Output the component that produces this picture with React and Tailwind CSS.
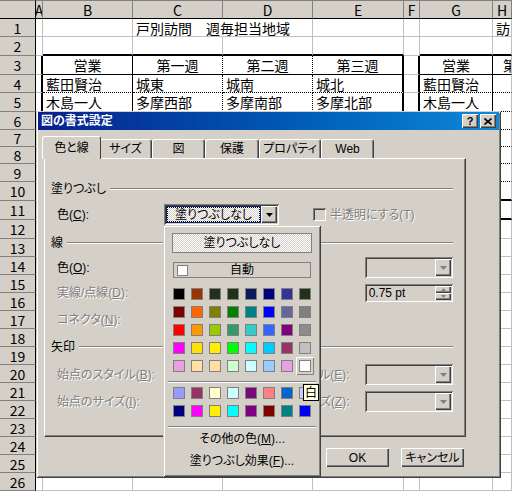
import React from 'react';

const UI = "font-['Liberation_Sans','Noto_Sans_CJK_JP',sans-serif] [font-feature-settings:'palt']";
const DIS = 'text-[#808080] [text-shadow:1px_1px_0_#ffffff]';
const RAISED = 'shadow-[inset_1px_1px_0_#ffffff,inset_-1px_-1px_0_#404040,inset_-2px_-2px_0_#808080]';
const SUNKEN = 'shadow-[inset_1px_1px_0_#808080,inset_-1px_-1px_0_#ffffff,inset_2px_2px_0_#404040,inset_-2px_-2px_0_#d4d0c8]';
const FRAME = 'shadow-[inset_1px_1px_0_#d4d0c8,inset_-1px_-1px_0_#404040,inset_2px_2px_0_#ffffff,inset_-2px_-2px_0_#808080]';
const DITHER = 'bg-[image:repeating-conic-gradient(#ffffff_0_25%,#d4d0c8_0_50%)] bg-[length:2px_2px]';

const LETTERS = ['', 'A', 'B', 'C', 'D', 'E', 'F', 'G', 'H'];

const CELLS = {
  '1-3': '戸別訪問　週毎担当地域',
  '1-8': '訪問',
  '3-2': '営業', '3-3': '第一週', '3-4': '第二週', '3-5': '第三週', '3-7': '営業', '3-8': '第一週',
  '4-2': '藍田賢治', '4-3': '城東', '4-4': '城南', '4-5': '城北', '4-7': '藍田賢治',
  '5-2': '木島一人', '5-3': '多摩西部', '5-4': '多摩南部', '5-5': '多摩北部', '5-7': '木島一人',
};

const PAL1 = [
  ['#000000', '#993300', '#22301a', '#1c3314', '#0c1a5a', '#000080', '#333399', '#22301a'],
  ['#800000', '#ff6600', '#808000', '#008000', '#008080', '#0000ff', '#666699', '#808080'],
  ['#ff0000', '#ff9900', '#99cc00', '#339966', '#33cccc', '#3366ff', '#800080', '#8c8c8c'],
  ['#ff00ff', '#ffe100', '#ffee00', '#00ff00', '#00ffff', '#00ccff', '#993366', '#c0c0c0'],
  ['#e8a0e0', '#ffe0a0', '#ffe0a0', '#ccffcc', '#ccffff', '#99ccff', '#e8a0e0', '#ffffff'],
];
const PAL2 = [
  ['#9999ff', '#993366', '#ffffcc', '#ccffff', '#7a0a7a', '#ff8080', '#0066cc', '#ccccff'],
  ['#000080', '#ff00ff', '#ffee00', '#00ffff', '#800080', '#800000', '#008080', '#0000ff'],
];

const inTable = (r, c) => r >= 3 && r <= 10 && ((c >= 2 && c <= 5) || c >= 7);

function bottomCls(r, c) {
  if (r === 2 && ((c >= 2 && c <= 5) || c >= 7)) return 'border-b-2 border-b-black';
  if (inTable(r, c) && r === 3) return 'border-b border-b-black';
  if (inTable(r, c) && r < 10) return 'border-b border-b-black [border-bottom-style:dotted]!';
  if (inTable(r, c) && r === 10) return 'border-b-2 border-b-black';
  if (r === 11 && c === 8) return 'border-b-2 border-b-black';
  return 'border-b border-b-[#c0c0c0]';
}

function rightCls(r, c) {
  const band = r >= 3 && r <= 10;
  if (r === 1 && c === 3) return 'border-r border-r-transparent';
  if (band && (c === 1 || c === 5 || c === 6)) return 'border-r-2 border-r-black';
  if (band && (c === 2 || c === 7)) return 'border-r border-r-black';
  if (band && (c === 3 || c === 4)) return 'border-r border-r-black [border-right-style:dotted]!';
  return 'border-r border-r-[#c0c0c0]';
}

function Cell({ r, c }) {
  const text = CELLS[`${r}-${c}`];
  const align = r === 3 && c !== 8 ? 'justify-center' : r === 3 ? 'pl-[10px]' : 'pl-[3px]';
  const spill = r === 1 && c === 3 ? 'relative z-10 overflow-visible' : 'overflow-hidden';
  return (
    <div className={`flex items-center whitespace-nowrap leading-none ${align} ${spill} ${rightCls(r, c)} ${bottomCls(r, c)}`}>
      {text}
    </div>
  );
}

function Sheet() {
  const rows = Array.from({ length: 26 }, (_, i) => i + 1);
  return (
    <div className="grid grid-cols-[36px_7px_90px_90px_90px_91px_16px_73px_19px] grid-rows-[19px_18px_19px_19px_18px_19px_18px_17px_17px_18px_19px_19px_19px_repeat(14,18px)] font-['Noto_Sans_CJK_JP',sans-serif] text-[14px] text-black">
      {LETTERS.map((l, c) => (
        <div key={c} className={`flex items-center justify-center overflow-hidden bg-[#d4d0c8] leading-none border-t border-t-[#808080] border-b border-b-black border-r ${c === 0 ? 'border-r-black' : 'border-r-[#808080]'}`}>
          {l}
        </div>
      ))}
      {rows.map(r => (
        <React.Fragment key={r}>
          <div className="flex items-center justify-center bg-[#d4d0c8] leading-none border-r border-r-black border-b border-b-[#808080]">{r}</div>
          {[1, 2, 3, 4, 5, 6, 7, 8].map(c => <Cell key={c} r={r} c={c} />)}
        </React.Fragment>
      ))}
    </div>
  );
}

function Arrow({ disabled }) {
  return (
    <div className={`flex h-full w-[16px] items-center justify-center bg-[#d4d0c8] ${RAISED}`}>
      <svg width="7" height="4" viewBox="0 0 7 4">
        <polygon points="0,0 7,0 3.5,4" fill={disabled ? '#808080' : '#000000'} />
      </svg>
    </div>
  );
}

function Combo() {
  return (
    <div className={`flex h-[21px] w-[89px] bg-[#d4d0c8] p-[2px] ${SUNKEN}`}>
      <div className="flex-1" />
      <Arrow disabled />
    </div>
  );
}

function Spinner() {
  return (
    <div className={`flex h-[18px] w-[89px] items-center bg-[#d4d0c8] p-[2px] ${SUNKEN}`}>
      <span className="flex-1 pl-[2px] text-[12px] leading-none">0.75 pt</span>
      <div className="flex h-full w-[16px] flex-col">
        <div className={`flex flex-1 items-center justify-center ${RAISED}`}>
          <svg width="5" height="3" viewBox="0 0 5 3"><polygon points="0,3 5,3 2.5,0" fill="#808080" /></svg>
        </div>
        <div className={`flex flex-1 items-center justify-center ${RAISED}`}>
          <svg width="5" height="3" viewBox="0 0 5 3"><polygon points="0,0 5,0 2.5,3" fill="#808080" /></svg>
        </div>
      </div>
    </div>
  );
}

function Section({ title, className }) {
  return (
    <div className={`flex h-[14px] items-center ${className}`}>
      <span className="leading-none">{title}</span>
      <div className="ml-[4px] h-[2px] flex-1 border-t border-t-[#808080] border-b border-b-white" />
    </div>
  );
}

const Key = ({ k }) => <>(<span className="underline">{k}</span>):</>;

function Swatch({ color, hot }) {
  return (
    <div className={`flex h-[18px] w-[18px] items-center justify-center ${hot ? 'shadow-[inset_1px_1px_0_#ffffff,inset_-1px_-1px_0_#808080]' : ''}`}>
      <div className="h-[12px] w-[12px] border border-[#808080]" style={{ backgroundColor: color }} />
    </div>
  );
}

function Palette() {
  return (
    <div className={`absolute left-[127px] top-[114px] flex h-[252px] w-[158px] flex-col bg-[#d4d0c8] text-[12px] ${FRAME}`}>
      <div className={`ml-[9px] mt-[8px] flex h-[20px] w-[140px] items-center justify-center border border-[#808080] leading-none ${DITHER}`}>
        塗りつぶしなし
      </div>
      <div className="ml-[10px] mt-[9px] flex h-[16px] w-[138px] items-center border border-[#808080] pl-[3px]">
        <div className="h-[11px] w-[11px] border border-[#808080] bg-white" />
        <span className="flex-1 pr-[14px] text-center leading-none">自動</span>
      </div>
      <div className="ml-[7px] mt-[7px] grid w-[144px] grid-cols-8">
        {PAL1.flatMap((row, i) => row.map((col, j) => <Swatch key={`${i}-${j}`} color={col} hot={i === 4 && j === 7} />))}
      </div>
      <div className="mx-[5px] mt-[6px] h-[2px] border-t border-t-[#808080] border-b border-b-white" />
      <div className="ml-[7px] mt-[1px] grid w-[144px] grid-cols-8">
        {PAL2.flatMap((row, i) => row.map((col, j) => <Swatch key={`${i}-${j}`} color={col} />))}
      </div>
      <div className="mx-[5px] mt-[6px] h-[2px] border-t border-t-[#808080] border-b border-b-white" />
      <div className="flex h-[22px] items-center justify-center leading-none">
        その他の色(<span className="underline">M</span>)...
      </div>
      <div className="flex h-[21px] items-center justify-center leading-none">
        塗りつぶし効果(<span className="underline">F</span>)...
      </div>
      <div className="absolute left-[140px] top-[159px] flex h-[17px] w-[16px] items-center justify-center border border-black bg-[#ffffe1] leading-none">
        白
      </div>
    </div>
  );
}

const TABS = [['色と線', 'w-[55px]'], ['サイズ', 'w-[53px]'], ['図', 'w-[53px]'], ['保護', 'w-[54px]'], ['プロパティ', 'w-[62px]'], ['Web', 'w-[53px]']];

function Dialog() {
  return (
    <div className={`absolute left-[36px] top-[111px] flex h-[367px] w-[465px] flex-col bg-[#d4d0c8] px-[2px] pt-[1px] text-[12px] text-black ${FRAME} ${UI}`}>
      <div className="flex h-[18px] items-center bg-linear-to-r from-[#0a1e8c] to-[#1088d8] pl-[3px] pr-[3px]">
        <span className="flex-1 text-[12px] font-bold leading-none text-white">図の書式設定</span>
        <div className={`flex h-[14px] w-[16px] items-center justify-center bg-[#d4d0c8] text-[11px] font-bold leading-none ${RAISED}`}>?</div>
        <div className={`ml-[2px] flex h-[14px] w-[16px] items-center justify-center bg-[#d4d0c8] ${RAISED}`}>
          <svg width="8" height="7" viewBox="0 0 8 7">
            <path d="M0.5 0.5 L7.5 6.5 M7.5 0.5 L0.5 6.5" stroke="#000" strokeWidth="1.6" />
          </svg>
        </div>
      </div>

      <div className="ml-[6px] mt-[6px] flex h-[22px] items-end">
        {TABS.map(([t, w], i) =>
          i === 0 ? (
            <div key={t} className={`relative z-10 -mx-[2px] -mb-[1px] flex h-[23px] w-[59px] items-center justify-center rounded-t-[3px] border-t border-l border-white border-r border-r-[#404040] bg-[#d4d0c8] leading-none`}>
              {t}
            </div>
          ) : (
            <div key={t} className={`flex h-[19px] ${w} items-center justify-center rounded-t-[3px] border-t border-l border-white border-r border-r-[#404040] shadow-[inset_-1px_0_0_#808080] leading-none`}>
              {t}
            </div>
          )
        )}
      </div>

      <div className="ml-[6px] flex h-[279px] w-[422px] flex-col border-t border-l border-white border-r border-b border-r-[#404040] border-b-[#404040] pl-[6px] pr-[12px] shadow-[inset_-1px_-1px_0_#808080]">
        <Section title="塗りつぶし" className="mt-[23px]" />
        <div className="mt-[8px] flex h-[21px] items-center pl-[6px]">
          <div className="w-[107px] leading-none">色<Key k="C" /></div>
          <div className={`flex h-[21px] w-[115px] bg-white p-[2px] ${SUNKEN}`}>
            <div className="flex-1 bg-[#0a246a] p-[1px]">
              <div className={`flex h-full items-center justify-center border border-dotted border-black leading-none ${DITHER}`}>
                塗りつぶしなし
              </div>
            </div>
            <Arrow />
          </div>
          <div className={`ml-[34px] h-[13px] w-[13px] bg-[#d4d0c8] ${SUNKEN}`} />
          <span className={`ml-[4px] leading-none ${DIS}`}>半透明にする(T)</span>
        </div>

        <Section title="線" className="mt-[11px]" />
        <div className="mt-[7px] flex h-[21px] items-center pl-[6px]">
          <div className="w-[107px] leading-none">色<Key k="O" /></div>
          <div className="w-[203px]" />
          <Combo />
        </div>
        <div className="mt-[6px] flex h-[18px] items-center pl-[6px]">
          <div className={`w-[107px] leading-none ${DIS}`}>実線/点線<Key k="D" /></div>
          <div className="w-[203px]" />
          <Spinner />
        </div>
        <div className="mt-[7px] flex h-[21px] items-center pl-[6px]">
          <div className={`w-[107px] leading-none ${DIS}`}>コネクタ<Key k="N" /></div>
        </div>

        <Section title="矢印" className="mt-[10px]" />
        <div className="mt-[10px] flex h-[21px] items-center pl-[6px]">
          <div className={`w-[107px] whitespace-nowrap leading-none ${DIS}`}>始点のスタイル<Key k="B" /></div>
          <div className={`w-[203px] whitespace-nowrap pr-[15px] text-right leading-none ${DIS}`}>終点のスタイル<Key k="E" /></div>
          <Combo />
        </div>
        <div className="mt-[6px] flex h-[21px] items-center pl-[6px]">
          <div className={`w-[107px] whitespace-nowrap leading-none ${DIS}`}>始点のサイズ<Key k="I" /></div>
          <div className={`w-[203px] whitespace-nowrap pr-[15px] text-right leading-none ${DIS}`}>終点のサイズ<Key k="Z" /></div>
          <Combo />
        </div>
      </div>

      <div className="mt-[11px] flex gap-[12px] pl-[288px]">
        <div className={`flex h-[19px] w-[63px] items-center justify-center bg-[#d4d0c8] leading-none ${RAISED}`}>OK</div>
        <div className={`flex h-[19px] w-[63px] items-center justify-center bg-[#d4d0c8] leading-none ${RAISED}`}>キャンセル</div>
      </div>

      <Palette />
    </div>
  );
}

export default function App() {
  return (
    <div className="relative h-[491px] w-[512px] overflow-hidden bg-white">
      <Sheet />
      <Dialog />
    </div>
  );
}
